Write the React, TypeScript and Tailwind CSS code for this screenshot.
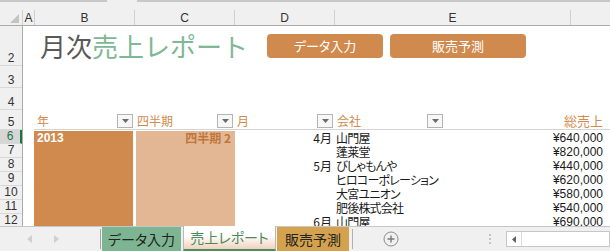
import React from "react";

const rowHeads = [
  { n: "2", h: "h-[40px]" },
  { n: "3", h: "h-[22px]" },
  { n: "4", h: "h-[22px]" },
  { n: "5", h: "h-[20px]" },
  { n: "6", h: "h-[14px]", active: true },
  { n: "7", h: "h-[14px]" },
  { n: "8", h: "h-[14px]" },
  { n: "9", h: "h-[14px]" },
  { n: "10", h: "h-[14px]" },
  { n: "11", h: "h-[14px]" },
  { n: "12", h: "h-[14px]" },
];

const sales = [
  { month: "4月", company: "山門屋", amount: "¥640,000" },
  { month: "", company: "蓬莱堂", amount: "¥820,000" },
  { month: "5月", company: "びしゃもんや", amount: "¥440,000" },
  { month: "", company: "ヒロコーポレーション", amount: "¥620,000" },
  { month: "", company: "大宮ユニオン", amount: "¥580,000" },
  { month: "", company: "肥後株式会社", amount: "¥540,000" },
  { month: "6月", company: "山門屋", amount: "¥690,000" },
];

const jp = "font-['Noto_Sans_CJK_JP',sans-serif] [font-feature-settings:'palt'_1]";

function FilterButton() {
  return (
    <div className="flex h-[14px] w-[16px] items-center justify-center border border-[#b4b4b4] bg-[#f7f7f7]">
      <svg width="7" height="4" viewBox="0 0 7 4">
        <path d="M0 0h7L3.5 4z" fill="#6b6b6b" />
      </svg>
    </div>
  );
}

function ColHead({ label, w }: { label: string; w: string }) {
  return (
    <div className={`${w} flex items-center justify-center border-r border-[#d0d0d0] pt-[1px] text-[12px] text-[#333]`}>
      {label}
    </div>
  );
}

export default function App() {
  return (
    <div className="flex h-[251px] w-[610px] flex-col overflow-hidden bg-white font-['Liberation_Sans',sans-serif]">
      {/* formula bar edge */}
      <div className="flex h-[10px] shrink-0 bg-[#f0f0f0]">
        <div className="h-[2px] w-[107px] bg-[#c8c8c8]" />
        <div className="h-[2px] w-[30px]" />
        <div className="h-[2px] flex-1 bg-[#c8c8c8]" />
      </div>

      {/* column headers */}
      <div className="flex h-[16px] shrink-0 border-b border-[#ababab] bg-[#f0f0f0]">
        <div className="flex w-[23px] items-end justify-end border-r border-[#d0d0d0] pb-[2px] pr-[3px]">
          <svg width="9" height="9" viewBox="0 0 9 9">
            <path d="M9 0v9H0z" fill="#c4c4c4" />
          </svg>
        </div>
        <ColHead label="A" w="w-[12px]" />
        <ColHead label="B" w="w-[100px]" />
        <ColHead label="C" w="w-[100px]" />
        <ColHead label="D" w="w-[100px]" />
        <ColHead label="E" w="w-[236px]" />
        <div className="flex-1" />
      </div>

      {/* body */}
      <div className="flex h-[200px] shrink-0 overflow-hidden">
        <div className="flex w-[23px] shrink-0 flex-col border-r border-[#ababab] bg-[#f0f0f0]">
          {rowHeads.map((r) => (
            <div
              key={r.n}
              className={`${r.h} flex shrink-0 items-end justify-center border-b border-[#d8d8d8] text-[12px] leading-[13px] ${
                r.active ? "border-r-2 border-r-[#217346] bg-[#d6d6d6] text-[#217346]" : "text-[#333]"
              }`}
            >
              {r.n}
            </div>
          ))}
        </div>

        <div className="flex flex-1 flex-col">
          {/* row 2: title + buttons */}
          <div className="flex h-[40px] shrink-0 items-center pl-[17px]">
            <h1 className="mt-[-1px] font-['Noto_Sans_CJK_JP',sans-serif] text-[26px] leading-[34px]">
              <span className="text-[#595959]">月次</span>
              <span className="text-[#80b795]">売上レポート</span>
            </h1>
            <div className="ml-[19px] mt-[-1px] flex gap-[7px]">
              <button className={`${jp} h-[24px] w-[116px] rounded-[4px] bg-[#d08a4e] text-[13px] text-white`}>
                データ入力
              </button>
              <button className={`${jp} h-[24px] w-[136px] rounded-[4px] bg-[#d08a4e] text-[13px] text-white`}>
                販売予測
              </button>
            </div>
          </div>

          <div className="h-[22px] shrink-0" />
          <div className="h-[22px] shrink-0" />

          {/* row 5: table headers */}
          <div className={`${jp} ml-[11px] flex h-[20px] shrink-0 items-center border-b border-[#d4d4d4] pt-[2px] text-[12px] text-[#d08a4e]`}>
            <div className="flex w-[100px] items-center justify-between pl-[3px] pr-[1px]">
              <span>年</span>
              <FilterButton />
            </div>
            <div className="flex w-[100px] items-center justify-between pl-[3px] pr-[1px]">
              <span>四半期</span>
              <FilterButton />
            </div>
            <div className="flex w-[100px] items-center justify-between pl-[3px] pr-[1px]">
              <span>月</span>
              <FilterButton />
            </div>
            <div className="flex w-[110px] items-center justify-between pl-[3px] pr-[1px]">
              <span>会社</span>
              <FilterButton />
            </div>
            <div className="flex-1 pr-[7px] text-right text-[13px]">総売上</div>
          </div>

          {/* data */}
          <div className="ml-[11px] mt-[1px] flex shrink-0">
            <div className="h-[110px] w-[99px] bg-[#d08a4e] pl-[3px] text-[12px] font-bold leading-[14px] text-white">
              2013
            </div>
            <div className={`${jp} ml-[3px] h-[110px] w-[99px] bg-[#e3b793] pr-[4px] text-right text-[12px] font-bold leading-[14px] text-[#c0763b]`}>
              四半期 2
            </div>
            <div className="flex flex-1 flex-col">
              {sales.map((s, i) => (
                <div key={i} className="flex h-[14px] shrink-0 items-center text-[12px] leading-[14px] text-[#1a1a1a]">
                  <div className={`${jp} w-[97px] text-right leading-[14px]`}>{s.month}</div>
                  <div className={`${jp} flex-1 pl-[4px] leading-[14px] tracking-[-0.8px]`}>{s.company}</div>
                  <div className="pr-[7px] text-right leading-[14px]">{s.amount}</div>
                </div>
              ))}
            </div>
          </div>
        </div>
      </div>

      {/* sheet tabs */}
      <div className="flex h-[25px] shrink-0 items-stretch border-t border-[#c6c6c6] bg-[#f0f0f0]">
        <div className="flex w-[100px] items-center gap-[22px] pl-[27px]">
          <svg width="5" height="8" viewBox="0 0 5 8">
            <path d="M5 0v8L0 4z" fill="#cfcfcf" />
          </svg>
          <svg width="5" height="8" viewBox="0 0 5 8">
            <path d="M0 0v8l5-4z" fill="#cfcfcf" />
          </svg>
        </div>
        <div className="my-[2px] w-px bg-[#a6a6a6]" />
        <div className={`${jp} ml-[1px] flex w-[79px] items-center justify-center bg-[#7db593] text-[14px] text-[#222]`}>
          データ入力
        </div>
        <div
          className={`${jp} -mt-px ml-[2px] flex w-[93px] items-center justify-center border-x border-[#b8b8b8] border-b-2 border-b-[#4f8c62] bg-gradient-to-b from-white from-40% to-[#f0d2bb] text-[14px] text-[#4a8a5e]`}
        >
          売上レポート
        </div>
        <div className={`${jp} ml-[1px] flex w-[72px] items-center justify-center bg-[#d4a24e] text-[14px] text-[#222]`}>
          販売予測
        </div>
        <div className="my-[2px] ml-[3px] w-px bg-[#b0b0b0]" />
        <div className="flex w-[76px] items-center justify-center">
          <svg width="16" height="16" viewBox="0 0 16 16">
            <circle cx="8" cy="8" r="7" fill="none" stroke="#8c8c8c" strokeWidth="1" />
            <path d="M8 4.5v7M4.5 8h7" stroke="#7a7a7a" strokeWidth="1.4" />
          </svg>
        </div>
        <div className="flex w-[77px] flex-col items-end justify-center gap-[2px] pr-[15px]">
          <div className="h-[2px] w-[2px] bg-[#c4c4c4]" />
          <div className="h-[2px] w-[2px] bg-[#c4c4c4]" />
          <div className="h-[2px] w-[2px] bg-[#c4c4c4]" />
        </div>
        <div className="my-[4px] flex flex-1 border border-[#c6c6c6] bg-white">
          <div className="flex w-[15px] items-center justify-center border-r border-[#dadada]">
            <svg width="4" height="7" viewBox="0 0 4 7">
              <path d="M4 0v7L0 3.5z" fill="#606060" />
            </svg>
          </div>
        </div>
      </div>
    </div>
  );
}
